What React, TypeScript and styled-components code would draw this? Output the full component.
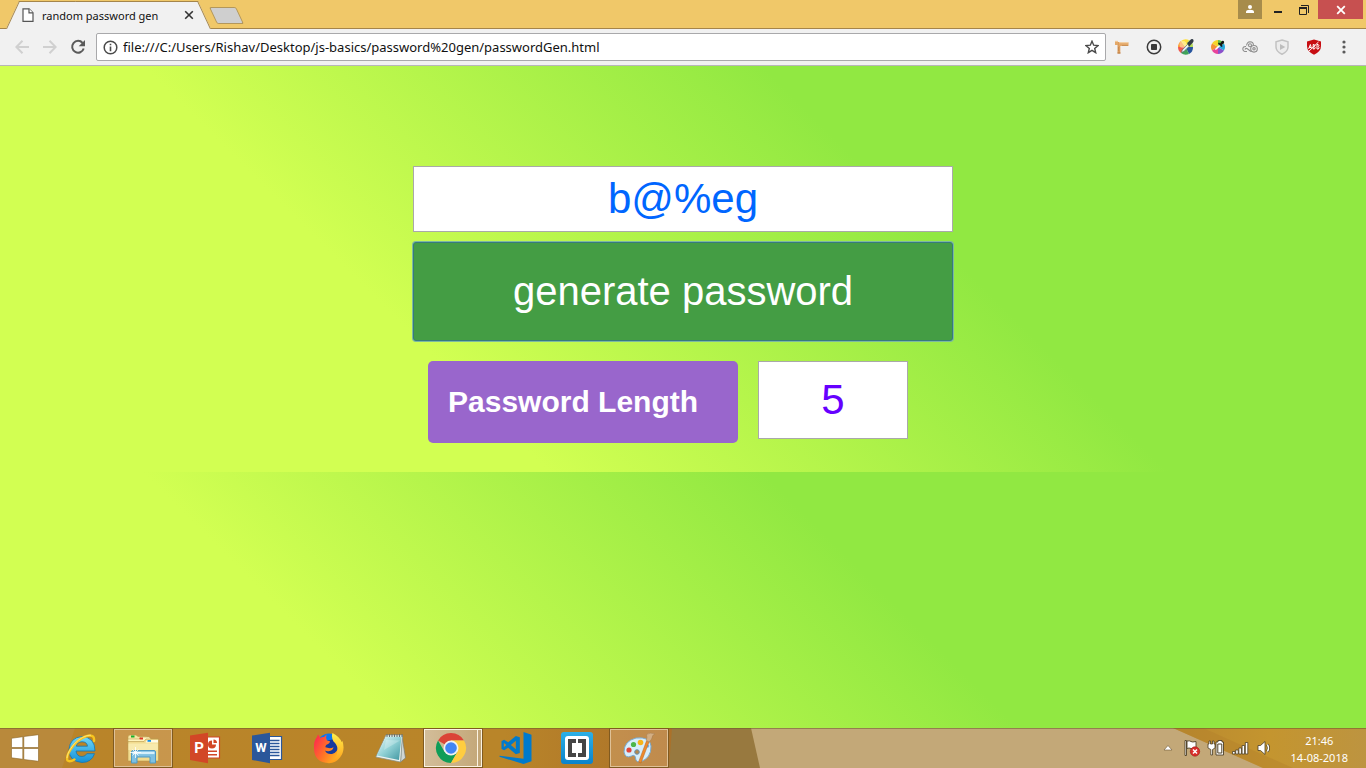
import React, { useState } from "react";
import styled, { createGlobalStyle } from "styled-components";

const GlobalStyle = createGlobalStyle`
  *, *::before, *::after { box-sizing: border-box; }
  body { margin: 0; font-family: "Liberation Sans", Arial, sans-serif; }
  svg { display: block; flex: none; }
  button, input { font-family: inherit; }
`;

const uiFont = `"Noto Sans", "Segoe UI", sans-serif`;

const Screen = styled.div`
  display: flex;
  flex-direction: column;
  min-height: 100vh;
`;

/* ---------- title bar ---------- */

const TitleBar = styled.header`
  display: flex;
  align-items: flex-start;
  height: 29px;
  padding: 0 3px 0 6px;
  background: #f0c869;
  box-shadow: inset 0 -1px #a5854a;
`;

const Tab = styled.div`
  position: relative;
  z-index: 0;
  display: flex;
  align-items: center;
  width: 205px;
  height: 28px;
  margin-top: 1px;
  padding: 0 16px;
  font: 11px ${uiFont};
  color: #111;

  &::before,
  &::after {
    content: "";
    position: absolute;
    z-index: -1;
    top: 0;
    bottom: 0;
    width: 60%;
    background: #f1f1f1;
    border-top: 1px solid #a5854a;
  }
  &::before {
    left: 0;
    border-left: 1px solid #a5854a;
    transform: skewX(-25deg);
    transform-origin: bottom left;
  }
  &::after {
    right: 0;
    border-right: 1px solid #a5854a;
    transform: skewX(25deg);
    transform-origin: bottom right;
  }
`;

const TabTitle = styled.span`
  flex: 1;
  margin-left: 8px;
  white-space: nowrap;
`;

const PlainButton = styled.button`
  display: flex;
  align-items: center;
  justify-content: center;
  padding: 0;
  border: 0;
  background: none;
`;

const TabClose = styled(PlainButton)`
  width: 12px;
  height: 12px;
`;

const NewTab = styled.button`
  width: 27px;
  height: 17px;
  margin: 7px 0 0 2px;
  padding: 0;
  background: #cfcfcf;
  border: 1px solid #b3975b;
  border-radius: 2px;
  transform: skewX(25deg);
`;

const WindowControls = styled.div`
  display: flex;
  margin-left: auto;
`;

const WindowButton = styled(PlainButton)<{ $width: number; $bg?: string }>`
  width: ${(p) => p.$width}px;
  height: 19px;
  background: ${(p) => p.$bg ?? "transparent"};

  &:last-child { margin-left: 4px; }
`;

/* ---------- tool bar ---------- */

const ToolBar = styled.nav`
  display: flex;
  align-items: center;
  height: 37px;
  padding: 0 8px;
  background: #f1f1f1;
  border-bottom: 1px solid #b8b6b8;
`;

const NavButton = styled(PlainButton)`
  width: 28px;
  height: 28px;
`;

const AddressBar = styled.div`
  display: flex;
  flex: 1;
  align-items: center;
  height: 28px;
  margin: 0 0 0 4px;
  padding: 0 6px;
  gap: 5px;
  background: #fff;
  border: 1px solid #a9a9ab;
  border-radius: 2px;
`;

const AddressInput = styled.input`
  flex: 1;
  min-width: 0;
  padding: 0;
  border: 0;
  outline: 0;
  background: none;
  color: #111;
  font: 13px ${uiFont};
`;

const Extension = styled(PlainButton)`
  width: 32px;
  height: 28px;

  &:last-child { width: 28px; }
`;

/* ---------- page ---------- */

const Page = styled.main`
  flex: 1;
  display: flex;
  flex-direction: column;
  align-items: center;
  padding: 100px 16px 32px;
  background: linear-gradient(45deg, #d2ff52 31%, #91e842 66%) 0 0 / 100% 406px;
`;

const Form = styled.form`
  display: flex;
  flex-direction: column;
  width: 100%;
  max-width: 540px;
`;

const TextBox = styled.input<{ $color: string; $height: number }>`
  width: 100%;
  height: ${(p) => p.$height}px;
  padding: 0;
  border: 1px solid #a9a9a9;
  background: #fff;
  color: ${(p) => p.$color};
  font-size: 42px;
  text-align: center;
`;

const GenerateButton = styled.button`
  height: 99px;
  margin-top: 10px;
  border: 1px solid #377b7e;
  border-radius: 3px;
  background: #449d44;
  box-shadow: 0 0 0 1px #7cb9a2;
  color: #fff;
  font-size: 40px;
`;

const LengthRow = styled.div`
  display: flex;
  align-items: flex-start;
  gap: 20px;
  margin: 20px 45px 0 15px;
`;

const LengthLabel = styled.label`
  flex: 1;
  padding: 20px;
  border-radius: 5px;
  background: #9966cc;
  color: #fff;
  font-size: 30px;
  font-weight: bold;
  line-height: 42px;
`;

const LengthCell = styled.div`
  width: 150px;
`;

/* ---------- task bar ---------- */

const TaskBar = styled.footer`
  position: relative;
  z-index: 0;
  display: flex;
  height: 40px;
  padding-right: 18px;
  background: #b8822a;
`;

const Wallpaper = styled.svg`
  position: absolute;
  z-index: -1;
  inset: 0;
  width: 100%;
  height: 100%;
`;

const StartButton = styled(PlainButton)`
  width: 50px;
  height: 40px;
`;

const Tasks = styled.div`
  display: flex;
  align-items: center;
  gap: 4px;
  margin-left: 2px;
`;

const Task = styled(PlainButton)<{ $state?: "open" | "front" }>`
  width: 58px;
  height: 38px;
  border: ${(p) =>
    p.$state === "front" ? "1px solid #fbf3e2" : p.$state ? "1px solid #dfc197" : "0"};
  background: ${(p) =>
    p.$state === "front"
      ? "linear-gradient(90deg, #d3bd99, #c3a778)"
      : p.$state
        ? "rgba(222, 178, 130, 0.4)"
        : "none"};
  outline: ${(p) => (p.$state ? "1px solid #805a20" : "0")};
  ${(p) =>
    p.$state === "front" &&
    "padding-right: 4px; box-shadow: inset -3px 0 #c3a778, inset -4px 0 #fbf3e2;"}
`;

const Tray = styled.div`
  display: flex;
  align-items: center;
  margin-left: auto;
`;

const TrayButton = styled(PlainButton)`
  width: 24px;
  height: 40px;
`;

const Clock = styled.time`
  display: flex;
  flex-direction: column;
  align-items: center;
  margin-left: 15px;
  padding-top: 2px;
  color: #fff;
  font: 11px/17px ${uiFont};
`;

/* ---------- small icons ---------- */

const FileIcon = () => (
  <svg width="12" height="14" viewBox="0 0 12 14" fill="#fff" stroke="#555" strokeWidth="1.2">
    <path d="M1 .8h6l4 4v8.600H1z" />
    <path d="M7 .8v4h4" />
  </svg>
);

const CloseIcon = ({ color, w = 1.6 }: { color: string; w?: number }) => (
  <svg width="10" height="10" viewBox="0 0 10 10" stroke={color} strokeWidth={w}>
    <path d="M1.200 1.200l7.600 7.600M8.800 1.200L1.200 8.800" />
  </svg>
);

const ArrowIcon = ({ back }: { back?: boolean }) => (
  <svg width="14" height="14" viewBox="0 0 14 14" fill="none" stroke="#d0d0d0" strokeWidth="2">
    {back ? <path d="M14 7H1.500M7.500 .8L1.300 7l6.200 6.200" /> : <path d="M0 7h12.500M6.500 .8L12.700 7l-6.200 6.200" />}
  </svg>
);

const ReloadIcon = () => (
  <svg width="16" height="16" viewBox="0 0 16 16">
    <path d="M12.600 4A5.900 5.900 0 1 0 13.700 9.500" fill="none" stroke="#5a5a5a" strokeWidth="2" />
    <path d="M15 1v6.300H8.700z" fill="#5a5a5a" />
  </svg>
);

const InfoIcon = () => (
  <svg width="15" height="15" viewBox="0 0 15 15">
    <circle cx="7.500" cy="7.500" r="6.300" fill="none" stroke="#4a4a4a" strokeWidth="1.500" />
    <path d="M6.700 3.700h1.600v1.600H6.700zM6.700 6.500h1.600v4.800H6.700z" fill="#4a4a4a" />
  </svg>
);

const StarIcon = () => (
  <svg width="14" height="14" viewBox="0 0 14 14">
    <path
      d="M7 1.200l1.700 4 4.300.4-3.300 2.800 1 4.300L7 10.400l-3.700 2.300 1-4.300L1 5.600l4.300-.4z"
      fill="none" stroke="#4a4a4a" strokeWidth="1.400"
    />
  </svg>
);

const UserIcon = () => (
  <svg width="10" height="10" viewBox="0 0 10 10" fill="#fff">
    <circle cx="5" cy="2" r="2" />
    <path d="M1 8V6.500Q1 5 5 4.700 9 5 9 6.500V8z" />
  </svg>
);

const MinimizeIcon = () => (
  <svg width="8" height="8" viewBox="0 0 8 8" fill="#222">
    <path d="M0 5h8v2H0z" />
  </svg>
);

const RestoreIcon = () => (
  <svg width="10" height="10" viewBox="0 0 10 10" fill="none" stroke="#222">
    <path d="M2 .5h7.500V8" />
    <path d="M.5 3v6.500h7V3" />
    <path d="M0 3h8" strokeWidth="2" />
  </svg>
);

const RulerIcon = () => (
  <svg width="16" height="16" viewBox="0 0 16 16">
    <path d="M3.500 3h2.800v11.500H3.500z" fill="#dc9c5c" />
    <path d="M1 2h3v4H1zM5 3.500h9.500V7H5z" fill="#e3a869" />
    <path d="M3.500 14h3M9 6v1M11 6v1M13 6v1M4 9h1M4 11h1" stroke="#b67a45" />
    <path d="M1 2.300h3M5 3.700h9.500" stroke="#f4cfa3" />
  </svg>
);

const StopRecordIcon = () => (
  <svg width="16" height="16" viewBox="0 0 16 16">
    <circle cx="8" cy="8" r="6.700" fill="none" stroke="#3a3a3a" strokeWidth="1.500" />
    <rect x="5" y="5" width="6" height="6" rx=".8" fill="#3a3a3a" />
  </svg>
);

const ColorBallIcon = () => (
  <svg width="18" height="18" viewBox="0 0 18 18">
    <path d="M8.500 9L1 9A7.500 7.500 0 0 1 4 3z" fill="#fb9a2c" />
    <path d="M8.500 9L4 3A7.500 7.500 0 0 1 12 2z" fill="#ffdf38" />
    <path d="M8.500 9L12 2A7.500 7.500 0 0 1 16 9z" fill="#b5dc59" />
    <path d="M8.500 9L16 9A7.500 7.500 0 0 1 12 16z" fill="#27559e" />
    <path d="M8.500 9L12 16A7.500 7.500 0 0 1 4 15z" fill="#3fa35a" />
    <path d="M8.500 9L4 15A7.500 7.500 0 0 1 1 9z" fill="#f0584e" />
    <circle cx="6" cy="6.500" r="3.500" fill="#fff" opacity=".4" />
    <path d="M4.500 14.500l.7-2.500 5.300-5.500 1.700 1.700-5.300 5.300z" fill="#e8f2f6" stroke="#4a5560" strokeWidth=".6" />
    <path d="M10 5l1.500-1L14 1.300q2-.6 2.500.7t-1 3L13.500 7l-1 1.500z" fill="#333c46" />
  </svg>
);

const ColorWheelIcon = () => (
  <svg width="16" height="16" viewBox="0 0 16 16">
    <path d="M8 8V1A7 7 0 0 0 2 4.500z" fill="#f5d529" />
    <path d="M8 8L2 4.500A7 7 0 0 0 2 11.500z" fill="#f39132" />
    <path d="M8 8L2 11.500A7 7 0 0 0 8 15z" fill="#e8439b" />
    <path d="M8 8v7a7 7 0 0 0 6-3.500z" fill="#8b50cb" />
    <path d="M8 8l6 3.500a7 7 0 0 0 0-7z" fill="#26a7de" />
    <path d="M8 8l6-3.500A7 7 0 0 0 8 1z" fill="#67bf45" />
    <path d="M5 11l.5-1.600 3.500-3.500 1.200 1.200-3.600 3.500z" fill="#fff" />
    <path d="M8 4.500l1-1 1 1 2-2.500q1.500-.5 2 .5t-.5 2L11.700 6l1 1-1 1z" fill="#151515" />
  </svg>
);

const CloudRingsIcon = () => (
  <svg width="16" height="12" viewBox="0 0 16 12" fill="none" stroke="#8d8d8d" strokeWidth="1.100">
    <path d="M5 10.500Q1 11 .8 8 1 5.300 4 5.600M4.600 4.500Q5 1 8 .8 11.400 1 11.400 4" />
    <circle cx="12" cy="7.800" r="3.300" />
    <circle cx="12" cy="7.800" r="1.200" />
    <circle cx="8" cy="4.300" r="1.500" />
    <path d="M3 8.500Q3.500 7 5 7.500L9 10.500" />
  </svg>
);

const ShieldPlayIcon = () => (
  <svg width="16" height="16" viewBox="0 0 16 16">
    <path d="M8 1l6 1.800V8q0 4.500-6 7.200Q2 12.500 2 8V2.800z" fill="#ececec" stroke="#c2c2c2" strokeWidth="1.500" />
    <path d="M6 5l5.300 3L6 11z" fill="#bdbdbd" />
  </svg>
);

const AdBlockIcon = () => (
  <svg width="16" height="16" viewBox="0 0 16 16">
    <path d="M8 .4l7 2V7q0 5.500-7 8.700Q1 12.500 1 7V2.400z" fill="#c70d12" />
    <path
      d="M2.600 10L4.400 5.500l1 4M3.200 8.500h2M7.200 10V5.500h1q1.500.5 0 2 2 .5 .3 2.500zM11 10V5.500h1.200q1.500.5 0 2 1.800.5 .2 2.500zM2.500 12.500L12.500 3"
      fill="none" stroke="#fff" strokeWidth="1"
    />
  </svg>
);

const MenuIcon = () => (
  <svg width="4" height="14" viewBox="0 0 4 14" fill="#5a5a5a">
    <circle cx="2" cy="2" r="1.600" />
    <circle cx="2" cy="7" r="1.600" />
    <circle cx="2" cy="12" r="1.600" />
  </svg>
);

/* ---------- task bar icons ---------- */

const WindowsLogo = () => (
  <svg width="28" height="28" viewBox="0 0 28 28" fill="#fff" stroke="#8a6528" strokeWidth=".6">
    <path d="M.5 4.300L11.800 2.700v10.800H.5zM12.800 2.500L27.500.7v12.800H12.800zM.5 14.500h11.300v10.800L.5 23.800zM12.800 14.500h14.700v12.800l-14.700-1.800z" />
  </svg>
);

const ExplorerLogo = () => (
  <svg width="34" height="32" viewBox="0 0 34 32">
    <defs>
      <linearGradient id="ie" x2="0" y2="1">
        <stop stopColor="#6fd8fb" />
        <stop offset="1" stopColor="#1490d6" />
      </linearGradient>
    </defs>
    <path
      d="M31 19H12q.6 5.500 6 5.500 3.500 0 4.800-2.800H30.500Q27.500 30.500 18 30.500 5 29.500 5 17.500 6 5.500 18 4.500 31 5.500 31 19zM12.300 14.200H23.500Q23 9.800 18 9.800 13.200 9.800 12.300 14.200z"
      fill="url(#ie)" stroke="#1276b4" strokeWidth=".8"
    />
    <path
      d="M30 9q.8-6-5-5.500Q16.500 5 9 14 1.500 24 3.500 28.500q2 2 7-1"
      fill="none" stroke="#f7c51e" strokeWidth="2.400" strokeLinecap="round"
    />
    <path d="M27 3.200Q19 3 10 12 3 21 3 26" fill="none" stroke="#ffe98a" strokeWidth=".8" />
  </svg>
);

const FoldersLogo = () => (
  <svg width="34" height="32" viewBox="0 0 34 32">
    <path d="M2 5q0-2 2-2h6l2 1.500h9v4H2z" fill="#f6e6a4" stroke="#bd9a48" strokeWidth=".6" />
    <path d="M5 3.500h3.500v2H5z" fill="#16b02b" />
    <path d="M2 7h11l2-2h8l2 2h7v4H2z" fill="#fff4bd" stroke="#c5a558" strokeWidth=".6" />
    <path d="M13.500 5.500H17v2h-3.500z" fill="#dc3b28" />
    <path d="M2 9.500h16l2-2.500h12.500V29H2z" fill="#f2dc8f" stroke="#b9974a" strokeWidth=".6" />
    <path d="M21 8h11v2.500H19.500z" fill="#fffbe7" />
    <path d="M21.500 8h3.500v1.800h-3.500z" fill="#1790e2" />
    <path d="M2.400 11.500h29.500V18H2.400z" fill="#fbf0b9" opacity=".7" />
    <path
      d="M5.500 20q0-1.500 1.500-1.500h21q1.500 0 1.500 1.500V31H24V25H11v6H5.500z"
      fill="#7fc1e2" stroke="#4f99c3"
    />
    <path d="M6.500 19.800h22v2.300h-22z" fill="#d5f0fb" />
    <path d="M9.500 15v11M4 20.500h11M6.500 17.500l6 6M12.500 17.500l-6 6" stroke="#fff" strokeWidth=".8" />
  </svg>
);

const OfficeText = styled.text`
  font: bold 15px Roboto, sans-serif;
  fill: #fff;
  text-anchor: middle;
`;

const OfficeTextSmall = styled(OfficeText)`
  font-size: 13px;
`;

const PowerPointLogo = () => (
  <svg width="32" height="32" viewBox="0 0 32 32">
    <path d="M17 5h13.500v21H17z" fill="#fff" stroke="#d24726" strokeWidth="1.200" />
    <path d="M23 8.500a4 4 0 1 0 4 4h-4z" fill="#d24726" />
    <path d="M24.500 7.500v3.500h3.500a3.500 3.500 0 0 0-3.500-3.500zM19 18.500h9v1.500h-9zM19 22h9v1.500h-9z" fill="#d24726" />
    <path d="M1 3.500L19 .8v30.400L1 28z" fill="#d24726" />
    <OfficeText x="10" y="21">P</OfficeText>
  </svg>
);

const WordLogo = () => (
  <svg width="32" height="32" viewBox="0 0 32 32">
    <path d="M17 4.500h13.500v23H17z" fill="#fff" stroke="#2b579a" strokeWidth="1.200" />
    <path d="M19 8.500h9.500M19 11.500h9.500M19 14.500h9.500M19 17.500h9.500M19 20.500h9.500M19 23.500h9.500" stroke="#2b579a" strokeWidth="1.400" />
    <path d="M1 3.500L19 .8v30.400L1 28z" fill="#2b579a" />
    <OfficeTextSmall x="10" y="20">W</OfficeTextSmall>
  </svg>
);

const FirefoxLogo = () => (
  <svg width="32" height="32" viewBox="0 0 32 32">
    <defs>
      <linearGradient id="ffBody" x1="0" y1=".2" x2="1" y2=".8">
        <stop stopColor="#ff2a4d" />
        <stop offset=".5" stopColor="#ff7426" />
        <stop offset="1" stopColor="#ffb91f" />
      </linearGradient>
      <linearGradient id="ffFlame" x2="0" y2="1">
        <stop stopColor="#fff04a" />
        <stop offset="1" stopColor="#ff9c1a" />
      </linearGradient>
    </defs>
    <circle cx="16" cy="13.500" r="12" fill="#0b76f0" />
    <path d="M10 20Q8 12 12 9l10-2 4 10-5 7z" fill="#153a9e" />
    <path
      d="M1 16.500Q.5 9 4 5l1-2.500L7.500 6Q9 4.500 11 5l2.500-2.500Q12.500 6 14 8.500l3 .7q0 2-3.500 3.500-1.500 1-1 2.500l4 1q2.500 0 4-1-.5 3-4 3.800-3 .6-4.500-.5 1.500 4 7 3.500 6-1.500 6-8 5 12-9 17Q1.500 31 1 16.500z"
      fill="url(#ffBody)"
    />
    <path d="M19.500 1q7.500 4 9 9l1-1q3 10-2.500 16.500-5 6.500-13 5.500Q25 28 24.500 17 24 12 20.500 9.500 18 5 19.500 1z" fill="url(#ffFlame)" />
  </svg>
);

const NotepadLogo = () => (
  <svg width="32" height="32" viewBox="0 0 32 32">
    <defs>
      <linearGradient id="note" x2="1" y2="1">
        <stop stopColor="#e9fafa" />
        <stop offset=".5" stopColor="#8fd0d4" />
        <stop offset="1" stopColor="#3f95a0" />
      </linearGradient>
    </defs>
    <path d="M27 4l3.500 22-5 4z" fill="#cfd6d4" stroke="#757a74" strokeWidth=".7" />
    <path d="M11 3h16.500l-2 27L.8 25z" fill="#eef3f0" stroke="#84948f" strokeWidth=".7" />
    <path d="M11 4.500h15.500L24 28 1.800 23.500z" fill="url(#note)" />
    <path d="M12 2v3M14.500 2v3M17 2v3M19.500 2v3M22 2v3M24.500 2v3M27 2v3" stroke="#66706c" />
    <path d="M11 8l14 .5L9 18z" fill="#fff" opacity=".25" />
  </svg>
);

const ChromeLogo = () => (
  <svg width="32" height="32" viewBox="0 0 32 32">
    <path d="M16 16L3 8.500A15 15 0 0 1 29 8.500H16z" fill="#db4437" />
    <path d="M3 8.500A15 15 0 0 0 16 31l6.500-11.200L9.500 19.800z" fill="#0f9d58" />
    <path d="M29 8.500A15 15 0 0 1 16 31l6.500-11.200L16 8.500z" fill="#ffcd40" />
    <circle cx="16" cy="16" r="7.500" fill="#f1f1f1" />
    <circle cx="16" cy="16" r="5.800" fill="#4285f4" />
  </svg>
);

const CodeLogo = () => (
  <svg width="33" height="32" viewBox="0 0 98 96" fill="#007acc">
    <path d="M73 0l24 8v80l-24 8L1 74v-3l72 9z" />
    <path fillRule="evenodd" d="M50 12l12 4v47l-12 4-23-20-12 8-8-4V27l8-4 12 8zM50 26L35 39l15 13zM14 33v12l8-6z" />
  </svg>
);

const BracketsLogo = () => (
  <svg width="32" height="32" viewBox="0 0 32 32">
    <defs>
      <linearGradient id="br" x2="0" y2="1">
        <stop stopColor="#2cb0e6" />
        <stop offset="1" stopColor="#0b83cb" />
      </linearGradient>
    </defs>
    <rect width="32" height="32" rx="3" fill="url(#br)" />
    <rect x="4" y="4" width="24" height="24" rx="3" fill="#fff" />
    <path d="M7 7h8v4h-4v10h4v4H7zM17 7h8v18h-8v-4h4V11h-4z" fill="#454545" />
  </svg>
);

const PaintLogo = () => (
  <svg width="34" height="32" viewBox="0 0 34 32">
    <path
      d="M2 20Q2 9 14 6q14-1.500 15 8 .5 12-11 16-4 .5-4.500-4-.5-4-4-2-6 3-7.500-4z"
      fill="#d7eefb" stroke="#79a9cf"
    />
    <circle cx="15" cy="20" r="2.300" fill="#b5884d" stroke="#6791b2" />
    <circle cx="7" cy="18" r="2.600" fill="#e1453b" />
    <circle cx="11.500" cy="12.500" r="2.600" fill="#4cb64a" />
    <circle cx="18.500" cy="10.500" r="2.800" fill="#f7b51b" />
    <circle cx="25.500" cy="14" r="1.800" fill="#6fb0ee" />
    <path d="M24.500 9l2.500 1L19 31l-2.500-.8z" fill="#ee8a2c" stroke="#b4621c" strokeWidth=".5" />
    <path d="M24.300 8.500Q25.500 5 24.500 2.500 28 0 33 2q-3 1-3 4-1 3-3 3.800z" fill="#d3ae83" stroke="#a47c4e" strokeWidth=".5" />
  </svg>
);

/* ---------- tray icons ---------- */

const UpIcon = () => (
  <svg width="10" height="8" viewBox="0 0 10 8">
    <path d="M5 1.500L9 6H1z" fill="#fff" stroke="#6a5635" strokeWidth=".6" />
  </svg>
);

const FlagIcon = () => (
  <svg width="18" height="18" viewBox="0 0 18 18">
    <path d="M2 1.500h1.500V16.500H2zM4 2q3-.5 4 .5t5 0v7q-3 1-5 0t-4 0z" fill="#fff" stroke="#4c4027" strokeWidth=".9" />
    <circle cx="12" cy="12.500" r="4.700" fill="#d92d2a" stroke="#a01b18" strokeWidth=".6" />
    <path d="M10 10.500l4 4M14 10.500l-4 4" stroke="#fff" strokeWidth="1.500" />
  </svg>
);

const PlugIcon = () => (
  <svg width="18" height="18" viewBox="0 0 18 18">
    <path d="M2 2h1.500v3h2V2H7v3h1v4L5.500 10.500V16H3.800v-5.500L1 9V5h1z" fill="#fff" stroke="#4c4027" strokeWidth=".8" />
    <path d="M9 3h2V1.500h4V3h1.500v13H9z" fill="#fff" stroke="#4c4027" strokeWidth=".9" />
    <path d="M10.800 5h4v9h-4z" fill="#fff" stroke="#4c4027" />
  </svg>
);

const SignalIcon = () => (
  <svg width="18" height="14" viewBox="0 0 18 14" fill="#fff" stroke="#4c4027" strokeWidth=".8">
    <path d="M1.500 10.500h2.500v2.500H1.500zM4.700 9h2.500v4H4.700zM7.900 7h2.500v6H7.900zM11.100 4.500h2.500V13h-2.500zM14.300 1.500h2.500V13h-2.500z" />
  </svg>
);

const VolumeIcon = () => (
  <svg width="16" height="16" viewBox="0 0 16 16">
    <path d="M2 5.500h2.500L9 1.500v13l-4.500-4H2z" fill="#fff" stroke="#4c4027" strokeWidth=".8" />
    <path d="M11.500 4.500q2 3.500 0 7" fill="none" stroke="#4c4027" strokeWidth="2.800" />
    <path d="M11.500 4.500q2 3.500 0 7" fill="none" stroke="#fff" strokeWidth="1.400" />
  </svg>
);

const extensions = [
  { name: "Page ruler", icon: <RulerIcon /> },
  { name: "Recorder", icon: <StopRecordIcon /> },
  { name: "Colour picker", icon: <ColorBallIcon /> },
  { name: "Eye dropper", icon: <ColorWheelIcon /> },
  { name: "Rings", icon: <CloudRingsIcon /> },
  { name: "Video shield", icon: <ShieldPlayIcon /> },
  { name: "Ad blocker", icon: <AdBlockIcon /> },
  { name: "Menu", icon: <MenuIcon /> },
];

const tasks: { name: string; icon: React.ReactNode; state?: "open" | "front" }[] = [
  { name: "Internet Explorer", icon: <ExplorerLogo /> },
  { name: "File Explorer", icon: <FoldersLogo />, state: "open" },
  { name: "PowerPoint", icon: <PowerPointLogo /> },
  { name: "Word", icon: <WordLogo /> },
  { name: "Firefox", icon: <FirefoxLogo /> },
  { name: "Notepad", icon: <NotepadLogo /> },
  { name: "Chrome", icon: <ChromeLogo />, state: "front" },
  { name: "Visual Studio Code", icon: <CodeLogo /> },
  { name: "Brackets", icon: <BracketsLogo /> },
  { name: "Paint", icon: <PaintLogo />, state: "open" },
];

const trayItems = [
  { name: "Show hidden icons", icon: <UpIcon /> },
  { name: "Action centre", icon: <FlagIcon /> },
  { name: "Battery", icon: <PlugIcon /> },
  { name: "Network", icon: <SignalIcon /> },
  { name: "Volume", icon: <VolumeIcon /> },
];

const alphabet = "abcdefghijklmnopqrstuvwxyz@%#$&";

export default function App() {
  const [password, setPassword] = useState("b@%eg");
  const [length, setLength] = useState("5");

  const generate = (event: React.FormEvent) => {
    event.preventDefault();
    const picks = Array.from({ length: Number(length) || 0 }, () =>
      alphabet.charAt(Math.floor(Math.random() * alphabet.length)),
    );
    setPassword(picks.join(""));
  };

  return (
    <Screen>
      <GlobalStyle />
      <TitleBar>
        <Tab>
          <FileIcon />
          <TabTitle>random password gen</TabTitle>
          <TabClose aria-label="Close tab"><CloseIcon color="#333" /></TabClose>
        </Tab>
        <NewTab aria-label="New tab" />
        <WindowControls>
          <WindowButton $width={24} $bg="#a78c4b" aria-label="Profile"><UserIcon /></WindowButton>
          <WindowButton $width={32} aria-label="Minimize"><MinimizeIcon /></WindowButton>
          <WindowButton $width={20} aria-label="Restore"><RestoreIcon /></WindowButton>
          <WindowButton $width={45} $bg="#c75050" aria-label="Close"><CloseIcon color="#fff" w={1.8} /></WindowButton>
        </WindowControls>
      </TitleBar>

      <ToolBar>
        <NavButton aria-label="Back"><ArrowIcon back /></NavButton>
        <NavButton aria-label="Forward"><ArrowIcon /></NavButton>
        <NavButton aria-label="Reload"><ReloadIcon /></NavButton>
        <AddressBar>
          <InfoIcon />
          <AddressInput
            aria-label="Address"
            defaultValue="file:///C:/Users/Rishav/Desktop/js-basics/password%20gen/passwordGen.html"
          />
          <StarIcon />
        </AddressBar>
        {extensions.map((e) => (
          <Extension key={e.name} aria-label={e.name}>{e.icon}</Extension>
        ))}
      </ToolBar>

      <Page>
        <Form onSubmit={generate}>
          <TextBox $color="#0066ff" $height={66} aria-label="Password" value={password} readOnly />
          <GenerateButton type="submit">generate password</GenerateButton>
          <LengthRow>
            <LengthLabel htmlFor="length">Password Length</LengthLabel>
            <LengthCell>
              <TextBox
                id="length"
                $color="#6600ff"
                $height={78}
                value={length}
                onChange={(e) => setLength(e.target.value)}
              />
            </LengthCell>
          </LengthRow>
        </Form>
      </Page>

      <TaskBar>
        <Wallpaper viewBox="0 0 1366 40" preserveAspectRatio="none">
          <defs>
            <linearGradient id="sand">
              <stop stopColor="#bd8c3a" />
              <stop offset=".1" stopColor="#b98429" />
              <stop offset=".75" stopColor="#b98529" />
              <stop offset="1" stopColor="#ab712a" />
            </linearGradient>
            <linearGradient id="gold">
              <stop stopColor="#b9892f" />
              <stop offset=".5" stopColor="#c4952f" />
              <stop offset="1" stopColor="#bd9440" />
            </linearGradient>
          </defs>
          <path d="M0 0h672v40H0z" fill="url(#sand)" />
          <path d="M0 0h75L62 40H0z" fill="#b9893b" />
          <path d="M672 0h90v40h-93z" fill="#98793f" />
          <path d="M751 0h615v40H760z" fill="#c3a878" />
          <path d="M1173 0h193v40h-103z" fill="url(#gold)" />
          <path d="M1173 0h30l90 40h-30z" fill="#b3802c" opacity=".45" />
          <path d="M0 0h1366v1H0z" fill="#6d5b2c" opacity=".55" />
        </Wallpaper>
        <StartButton aria-label="Start"><WindowsLogo /></StartButton>
        <Tasks>
          {tasks.map((t) => (
            <Task key={t.name} $state={t.state} aria-label={t.name}>{t.icon}</Task>
          ))}
        </Tasks>
        <Tray>
          {trayItems.map((t) => (
            <TrayButton key={t.name} aria-label={t.name}>{t.icon}</TrayButton>
          ))}
          <Clock>
            <span>21:46</span>
            <span>14-08-2018</span>
          </Clock>
        </Tray>
      </TaskBar>
    </Screen>
  );
}
